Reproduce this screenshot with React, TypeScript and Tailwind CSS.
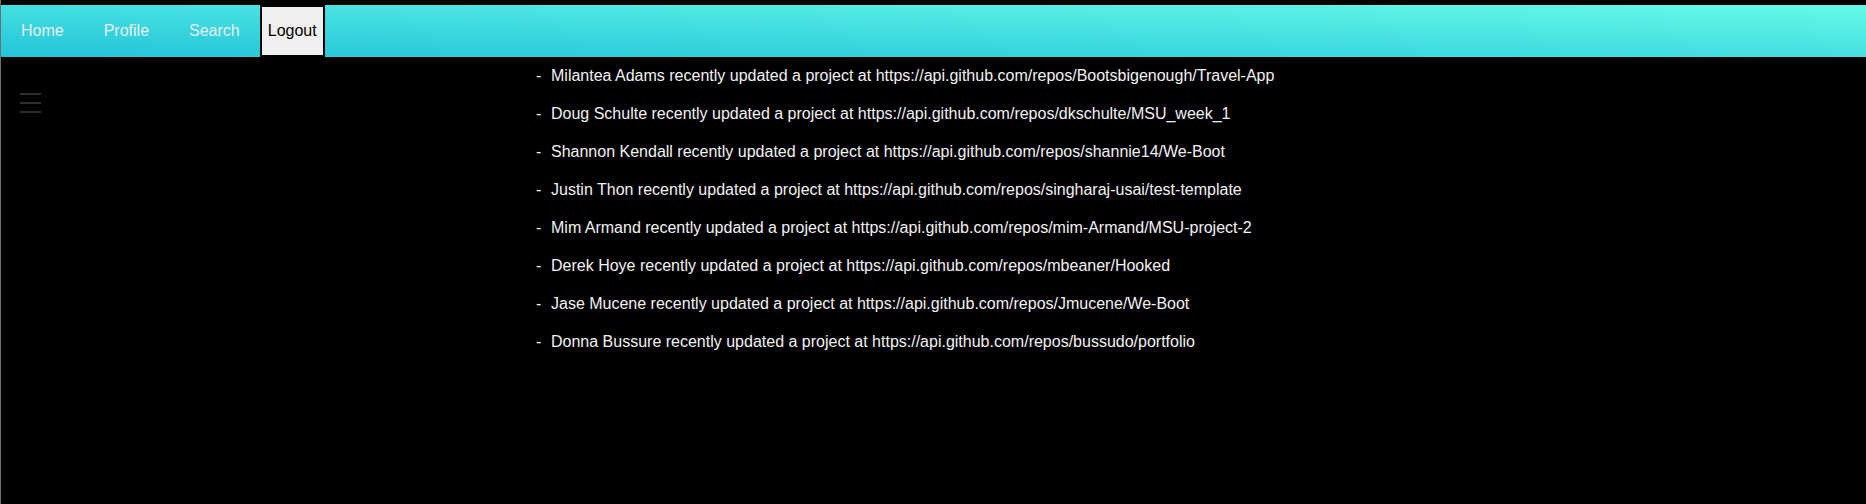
import React from "react";

const updates = [
  { name: "Milantea Adams", repo: "Bootsbigenough/Travel-App" },
  { name: "Doug Schulte", repo: "dkschulte/MSU_week_1" },
  { name: "Shannon Kendall", repo: "shannie14/We-Boot" },
  { name: "Justin Thon", repo: "singharaj-usai/test-template" },
  { name: "Mim Armand", repo: "mim-Armand/MSU-project-2" },
  { name: "Derek Hoye", repo: "mbeaner/Hooked" },
  { name: "Jase Mucene", repo: "Jmucene/We-Boot" },
  { name: "Donna Bussure", repo: "bussudo/portfolio" },
];

function NavBar() {
  return (
    <nav className="flex h-[52px] items-stretch bg-[linear-gradient(to_top_right,#24c4d9,#65fae8)] text-[16px]">
      {["Home", "Profile", "Search"].map((item) => (
        <a key={item} href="#" className="flex items-center px-5 text-[#ececec]">
          {item}
        </a>
      ))}
      <button className="border-2 border-black bg-[#efefef] px-[6px] text-[16px] text-black">
        Logout
      </button>
    </nav>
  );
}

function Hamburger() {
  return (
    <svg width="22" height="22" viewBox="0 0 22 22" className="block">
      <rect x="0" y="0" width="21" height="2" fill="#2a2d32" />
      <rect x="0" y="9" width="21" height="2" fill="#2a2d32" />
      <rect x="0" y="18" width="21" height="2" fill="#2a2d32" />
    </svg>
  );
}

export default function App() {
  return (
    <div className="min-h-[504px] border-l border-[#6e6e6e] bg-black pt-[5px] font-['Liberation_Sans',Arial,sans-serif]">
      <NavBar />
      <div className="flex">
        <div className="w-[535px] shrink-0 pl-[19px] pt-[36px]">
          <Hamburger />
        </div>
        <ul className="flex flex-col gap-[20px] pt-[10px] text-[16px] leading-[18px] text-[#f2f2f2]">
          {updates.map((u) => (
            <li key={u.name} className="flex">
              <span className="w-[15px] shrink-0">-</span>
              <span>
                {u.name} recently updated a project at https://api.github.com/repos/{u.repo}
              </span>
            </li>
          ))}
        </ul>
      </div>
    </div>
  );
}
